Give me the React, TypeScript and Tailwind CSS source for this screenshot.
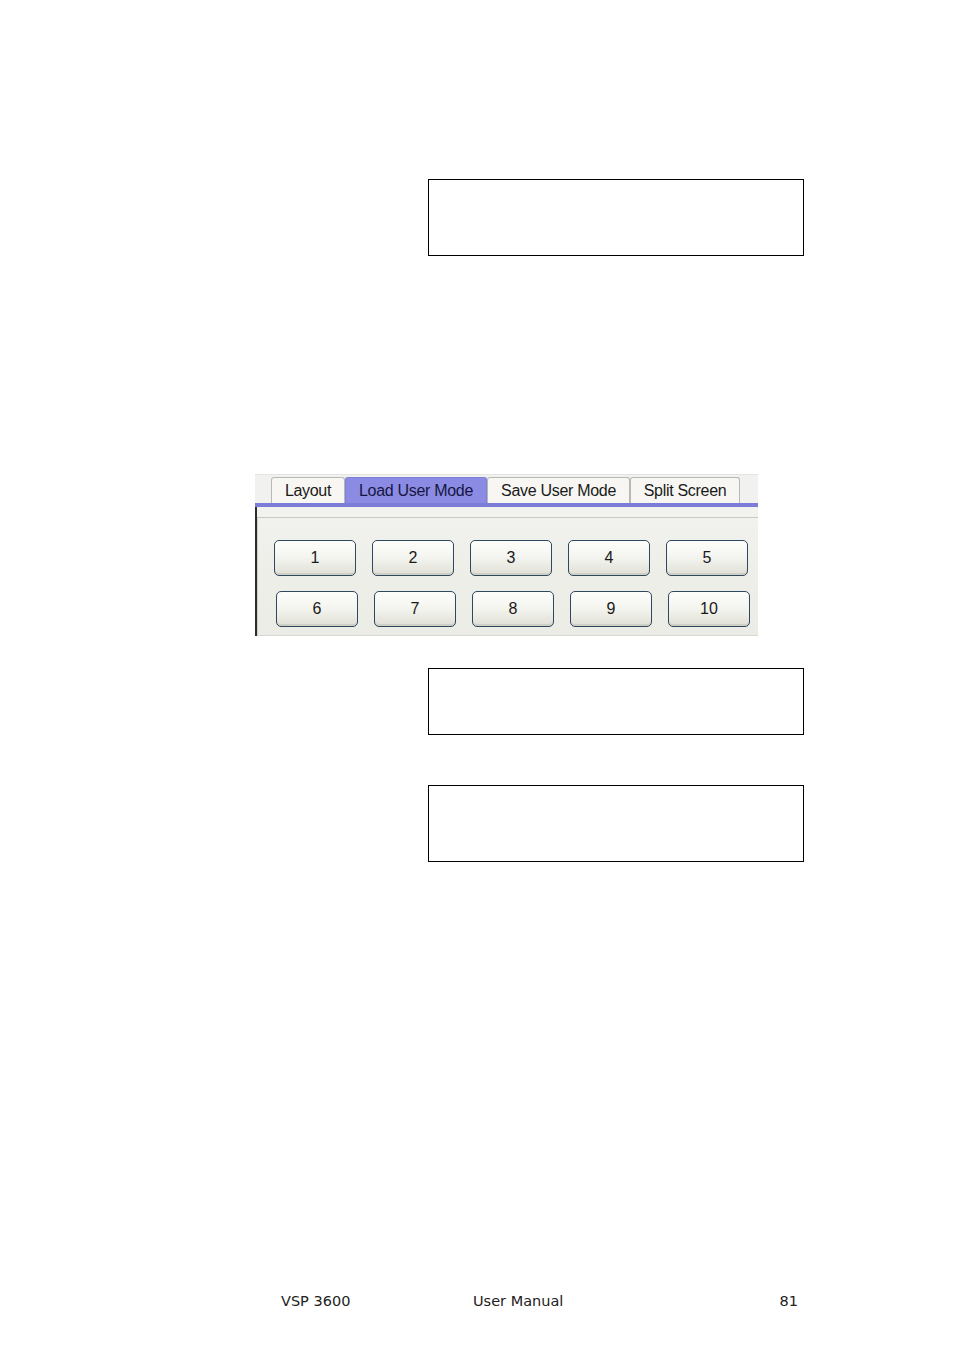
const tabs = [
  { label: "Layout", w: "w-[74px]", active: false },
  { label: "Load User Mode", w: "w-[142px]", active: true },
  { label: "Save User Mode", w: "w-[143px]", active: false },
  { label: "Split Screen", w: "w-[110px]", active: false },
];

function ModeButton({ n }: { n: number }) {
  return (
    <button className="w-[82px] h-[36px] rounded-[5px] border border-[#2f4860] bg-gradient-to-b from-[#fdfdfb] via-[#f4f4ef] to-[#dfdfd6] shadow-[inset_0_-2px_0_#d0cfc6] text-[16px] text-[#1a1a1a] flex items-center justify-center">
      {n}
    </button>
  );
}

function UserModePanel() {
  return (
    <div className="w-[503px] h-[162px] flex flex-col bg-[#f0f0ec] font-['Liberation_Sans',Arial,sans-serif]">
      {/* tab strip */}
      <div className="h-[29px] flex items-end pl-[16px] bg-[#f1f1ef] border-t border-[#e4e4e0]">
        {tabs.map((t) => (
          <div
            key={t.label}
            className={`${t.w} h-[26px] flex items-center justify-center text-[16px] tracking-[-0.3px] border border-b-0 rounded-t-[3px] ${
              t.active
                ? "bg-[#8b8be4] border-[#8080d8] text-[#161640]"
                : "bg-[#f7f6f2] border-[#b9b9b4] text-[#1a1a1a]"
            }`}
          >
            {t.label}
          </div>
        ))}
      </div>
      <div className="h-[4px] bg-[#7c7cd9]" />

      {/* body */}
      <div className="flex-1 flex border-l-2 border-[#2c2c2c]">
        <div className="flex-1 flex flex-col">
          <div className="h-[11px] bg-[#f2f2ee] border-b border-[#c9c9c3]" />
          <div className="flex-1 flex flex-col border-l border-[#cfcfc9] border-b border-b-[#d8d8d2] bg-gradient-to-b from-[#f1f1ed] to-[#ececE6]">
            <div className="flex gap-[16px] pl-[16px] pt-[22px]">
              {[1, 2, 3, 4, 5].map((n) => (
                <ModeButton key={n} n={n} />
              ))}
            </div>
            <div className="flex gap-[16px] pl-[18px] pt-[15px]">
              {[6, 7, 8, 9, 10].map((n) => (
                <ModeButton key={n} n={n} />
              ))}
            </div>
          </div>
        </div>
      </div>
    </div>
  );
}

export default function App() {
  return (
    <div className="w-[954px] h-[1350px] bg-white flex flex-col">
      <div className="ml-[428px] mt-[179px] w-[376px] h-[77px] border-[1.5px] border-black" />

      <div className="ml-[255px] mt-[218px]">
        <UserModePanel />
      </div>

      <div className="ml-[428px] mt-[32px] w-[376px] h-[67px] border-[1.5px] border-black" />
      <div className="ml-[428px] mt-[50px] w-[376px] h-[77px] border-[1.5px] border-black" />

      {/* footer */}
      <div className="mt-[431px] flex items-center h-[18px] pl-[281px] text-[14.5px] text-[#222] font-['DejaVu_Sans',Verdana,sans-serif]">
        <span className="w-[192px]">VSP 3600</span>
        <span>User Manual</span>
        <span className="ml-auto mr-[156px]">81</span>
      </div>
    </div>
  );
}
